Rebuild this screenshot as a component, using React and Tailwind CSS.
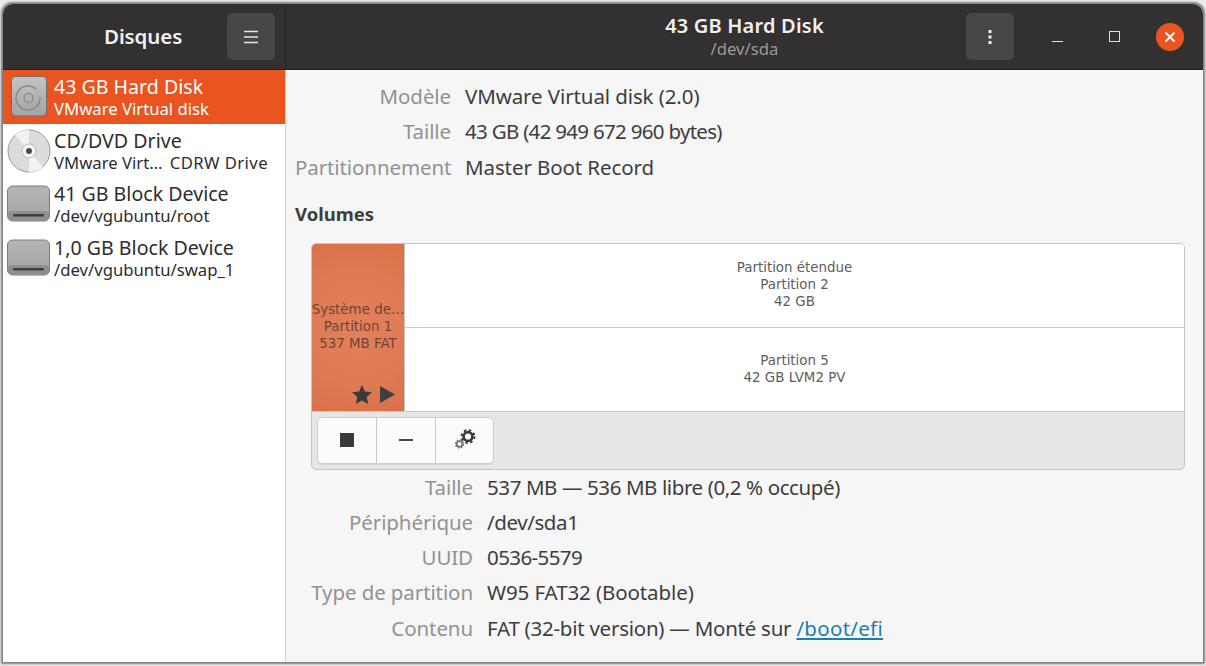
const ui = { fontFamily: '"Noto Sans", "Open Sans", sans-serif' };

function DiskIcon({ kind }) {
  if (kind === "hdd") {
    return (
      <svg width="36" height="41" viewBox="0 0 36 41">
        <defs>
          <linearGradient id="hddFill" x1="0" y1="0" x2="0" y2="1">
            <stop offset="0%" stopColor="#c4c4c4" />
            <stop offset="100%" stopColor="#a3a3a3" />
          </linearGradient>
        </defs>
        <rect x="0.5" y="0.5" width="35" height="39.5" rx="4" fill="url(#hddFill)" stroke="#6f6f6f" />
        <circle cx="17.5" cy="22" r="4.5" fill="none" stroke="#808080" strokeWidth="1.2" />
        <path d="M25 13 A12 12 0 1 0 29 21" fill="none" stroke="#808080" strokeWidth="1.2" />
      </svg>
    );
  }
  if (kind === "cd") {
    return (
      <svg width="44" height="44" viewBox="0 0 44 44">
        <circle cx="22" cy="22" r="21" fill="#dcdcdc" stroke="#9a9a9a" />
        <path d="M22 22 L8 6 A21 21 0 0 1 22 1 Z" fill="#f2f2f2" />
        <path d="M22 22 L36 38 A21 21 0 0 1 22 43 Z" fill="#f2f2f2" />
        <circle cx="22" cy="22" r="7" fill="#f6f6f6" stroke="#b5b5b5" />
        <circle cx="22" cy="22" r="3" fill="#4a4a4a" />
      </svg>
    );
  }
  return (
    <svg width="44" height="38" viewBox="0 0 44 38">
      <defs>
        <linearGradient id="blockFill" x1="0" y1="0" x2="0" y2="1">
          <stop offset="0%" stopColor="#b5b5b5" />
          <stop offset="100%" stopColor="#a4a4a4" />
        </linearGradient>
      </defs>
      <rect x="0.5" y="1" width="42" height="35" rx="5" fill="url(#blockFill)" stroke="#7b7b7b" />
      <rect x="1" y="26" width="41" height="9.5" rx="4" fill="#8f8f8f" />
      <rect x="6" y="29" width="31" height="2.5" rx="1" fill="#3f3f3f" />
    </svg>
  );
}

function SidebarRow({ kind, title, sub, active }) {
  return (
    <div className={`flex h-[53.7px] items-center ${active ? "bg-[#e95420] text-white" : "text-[#2d2d2d]"}`}>
      <div className="flex w-[51px] shrink-0 justify-center pl-[1px]">
        <DiskIcon kind={kind} />
      </div>
      <div className="min-w-0 whitespace-nowrap">
        <div className="text-[19.6px] leading-[24px]">{title}</div>
        <div className="text-[16.7px] leading-[20px]">{sub}</div>
      </div>
    </div>
  );
}

function InfoGrid({ rows, className }) {
  return (
    <div className={`grid gap-x-[14px] ${className}`}>
      {rows.map(([label, value]) => (
        <div key={label} className="col-span-2 grid h-[35.2px] grid-cols-subgrid items-center">
          <div className="text-right text-[#929292]">{label}</div>
          <div className="whitespace-nowrap text-[#3d3d3d]">{value}</div>
        </div>
      ))}
    </div>
  );
}

function HeaderButton({ children }) {
  return (
    <div className="flex h-[47px] w-[48px] items-center justify-center rounded-[5px] bg-[#474645]">{children}</div>
  );
}

export default function App() {
  return (
    <div className="h-[666px] w-[1206px] overflow-hidden bg-[#ececec] pl-[3px] pt-[4px]" style={ui}>
      <div className="flex h-[658px] w-[1200px] flex-col overflow-hidden rounded-t-[10px] bg-[#f6f6f6] shadow-[0_0_2px_1.5px_rgba(90,90,90,0.75)]">
        <div className="flex h-[66px] shrink-0 border-b border-[#1f1f1f] bg-[#323030]">
          <div className="flex w-[283px] shrink-0 items-center border-r border-[#262525] pl-[101px]">
            <div className="w-[123px] text-[20.5px] font-semibold tracking-[-0.1px] text-[#f0f0f0]">Disques</div>
            <HeaderButton>
              <svg width="16" height="14" viewBox="0 0 16 14" stroke="#e6e6e6" strokeWidth="1.3">
                <path d="M1 1.5H15M1 7H15M1 12.5H15" />
              </svg>
            </HeaderButton>
          </div>
          <div className="grid flex-1 grid-cols-[1fr_auto_1fr] items-center">
            <div />
            <div className="pb-[1px] text-center">
              <div className="text-[20px] leading-[24px] font-semibold tracking-[0.2px] text-[#f0f0f0]">43 GB Hard Disk</div>
              <div className="text-[16.7px] leading-[21px] text-[#9a9a99]">/dev/sda</div>
            </div>
            <div className="flex items-center justify-end">
              <HeaderButton>
                <svg width="4" height="14" viewBox="0 0 4 14" fill="#efefef">
                  <rect x="0.5" y="0" width="3" height="3" />
                  <rect x="0.5" y="5.5" width="3" height="3" />
                  <rect x="0.5" y="11" width="3" height="3" />
                </svg>
              </HeaderButton>
              <div className="flex w-[86px] justify-center pt-[10px]">
                <div className="h-[1.5px] w-[11px] bg-[#e6e6e6]" />
              </div>
              <div className="ml-[9px] h-[11px] w-[11px] border-[1.5px] border-[#e0e0e0]" />
              <div className="ml-[36px] mr-[19px] flex h-[28px] w-[28px] items-center justify-center rounded-full bg-[#e95420]">
                <svg width="12" height="12" viewBox="0 0 12 12" stroke="#fff" strokeWidth="2">
                  <path d="M1.5 1.5L10.5 10.5M10.5 1.5L1.5 10.5" />
                </svg>
              </div>
            </div>
          </div>
        </div>

        <div className="flex min-h-0 flex-1">
          <div className="w-[283px] shrink-0 border-r border-[#cfcfcf] bg-white">
            <SidebarRow kind="hdd" title="43 GB Hard Disk" sub="VMware Virtual disk" active />
            <SidebarRow
              kind="cd"
              title="CD/DVD Drive"
              sub={
                <>
                  VMware Virt… <span className="ml-[3px] tracking-[0.4px]">CDRW Drive</span>
                </>
              }
            />
            <SidebarRow kind="block" title="41 GB Block Device" sub="/dev/vgubuntu/root" />
            <SidebarRow kind="block" title="1,0 GB Block Device" sub="/dev/vgubuntu/swap_1" />
          </div>

          <div className="min-w-0 flex-1 pl-[9px] pt-[9px] text-[20.5px] tracking-[-0.1px]">
            <InfoGrid
              className="grid-cols-[156px_1fr]"
              rows={[
                ["Modèle", "VMware Virtual disk (2.0)"],
                ["Taille", <span className="tracking-[-0.7px]">43 GB (42 949 672 960 bytes)</span>],
                ["Partitionnement", "Master Boot Record"],
              ]}
            />
            <div className="mt-[17px] text-[18.5px] leading-[24px] font-bold tracking-[0px] text-[#3d3d3d]">Volumes</div>
            <div className="ml-[16px] mt-[17px] w-[874px] overflow-hidden rounded-[5px] border border-[#c4c4c4] bg-[#e6e6e6]">
              <div className="flex h-[168px] border-b border-[#c9c9c9] bg-white font-['DejaVu_Sans'] text-[13.4px] leading-[17px] tracking-[0px] text-[#5d5d5d]">
                <div className="relative flex w-[93px] shrink-0 flex-col items-center overflow-hidden whitespace-nowrap border-r border-[#c4c4c4] bg-[radial-gradient(circle,#e2815b_0%,#df7a53_60%,#d9704a_100%)] pt-[57px] text-[#6e4436]">
                  <div>Système de…</div>
                  <div>Partition 1</div>
                  <div>537 MB FAT</div>
                  <div className="absolute bottom-[7px] right-[9px] flex items-center gap-[8px]">
                    <svg width="20" height="19" viewBox="0 0 20 19" fill="#3a3a3a">
                      <path d="M10 0L12.9 6.4L20 7.2L14.7 11.9L16.2 19L10 15.4L3.8 19L5.3 11.9L0 7.2L7.1 6.4Z" />
                    </svg>
                    <svg width="15" height="17" viewBox="0 0 15 17" fill="#3f3f3f">
                      <path d="M0 0L15 8.5L0 17Z" />
                    </svg>
                  </div>
                </div>
                <div className="flex flex-1 flex-col text-center">
                  <div className="flex h-[84px] flex-col justify-center border-b border-[#c9c9c9] pb-[1px]">
                    <div>Partition étendue</div>
                    <div>Partition 2</div>
                    <div>42 GB</div>
                  </div>
                  <div className="flex flex-1 flex-col justify-center">
                    <div>Partition 5</div>
                    <div>42 GB LVM2 PV</div>
                  </div>
                </div>
              </div>
              <div className="flex h-[57px] items-center pl-[5px]">
                <div className="flex h-[47px] rounded-[5px] border border-[#cdcdcd] bg-[#fbfbfb] shadow-[0_1px_0_#d5d5d5]">
                  <div className="flex w-[59px] items-center justify-center border-r border-[#c9c9c9]">
                    <div className="h-[14px] w-[14px] bg-[#3a3a3a]" />
                  </div>
                  <div className="flex w-[59px] items-center justify-center border-r border-[#c9c9c9]">
                    <div className="h-[1.5px] w-[14px] bg-[#444]" />
                  </div>
                  <div className="flex w-[57px] items-center justify-center pb-[2px]">
                    <svg width="22" height="22" viewBox="0 0 22 22" fill="none">
                      <circle cx="14" cy="8.5" r="4.4" stroke="#3a3a3a" strokeWidth="2.6" />
                      <circle cx="14" cy="8.5" r="6.4" stroke="#3a3a3a" strokeWidth="2" strokeDasharray="2.5 2.53" />
                      <circle cx="5.5" cy="16" r="2.8" stroke="#6a6a6a" strokeWidth="1.5" />
                      <circle cx="5.5" cy="16" r="4" stroke="#6a6a6a" strokeWidth="1.4" strokeDasharray="1.55 1.59" />
                    </svg>
                  </div>
                </div>
              </div>
            </div>
            <InfoGrid
              className="ml-[16px] grid-cols-[162px_1fr]"
              rows={[
                ["Taille", <span className="tracking-[-0.4px]">537 MB — 536 MB libre (0,2 % occupé)</span>],
                ["Périphérique", <span className="tracking-[-0.4px]">/dev/sda1</span>],
                ["UUID", <span className="tracking-[-0.6px]">0536-5579</span>],
                ["Type de partition", "W95 FAT32 (Bootable)"],
                [
                  "Contenu",
                  <>
                    <span className="tracking-[-0.25px]">FAT (32-bit version) — Monté sur </span>
                    <span className="tracking-[0.3px] text-[#1c7eb5] underline">/boot/efi</span>
                  </>,
                ],
              ]}
            />
          </div>
        </div>
      </div>
    </div>
  );
}
